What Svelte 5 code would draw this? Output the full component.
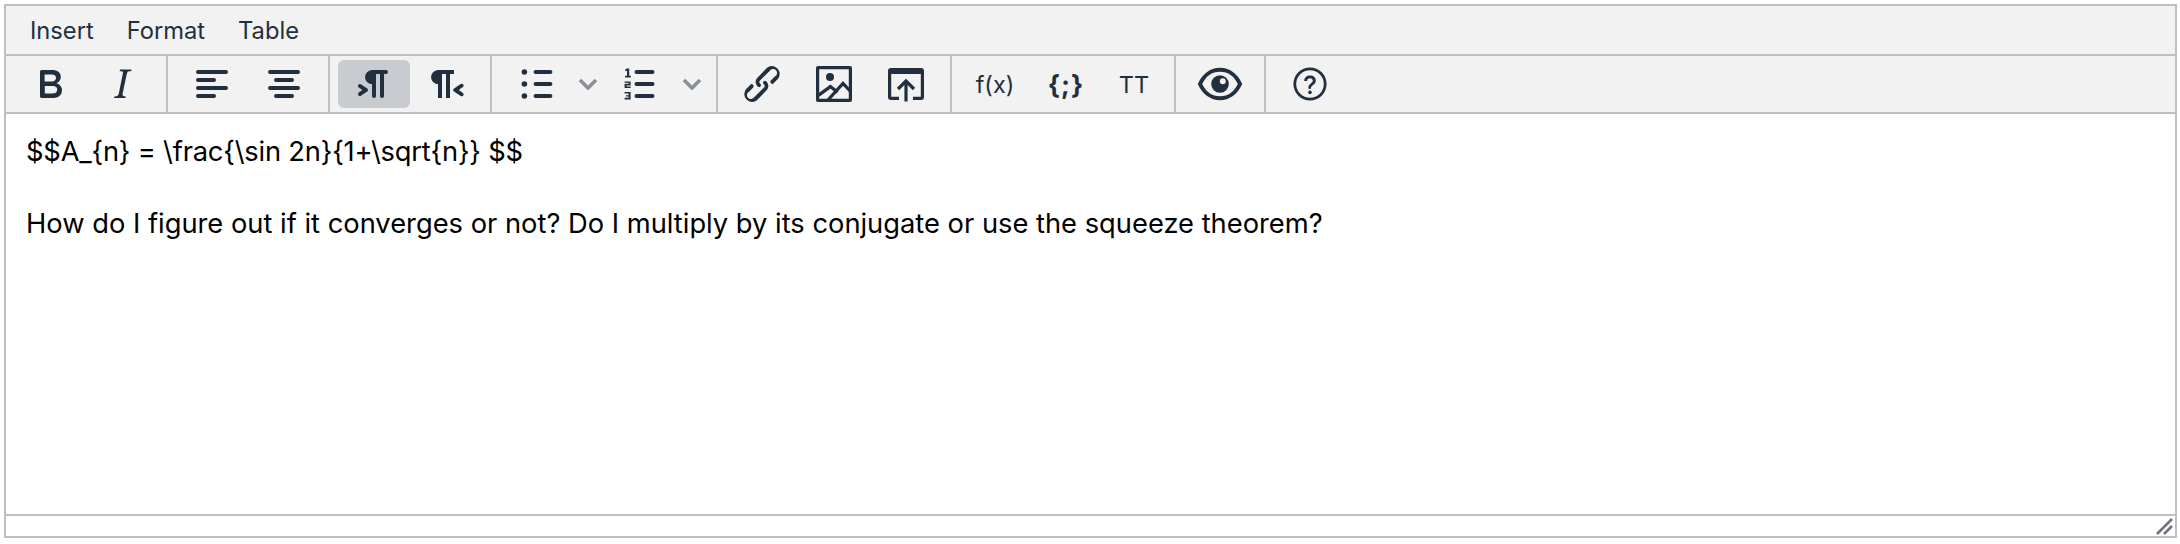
<script>
  const menus = ["Insert", "Format", "Table"];
</script>

<div class="editor">
  <div class="menubar">
    {#each menus as m}
      <button class="menu">{m}</button>
    {/each}
  </div>

  <div class="toolbar">
    <div class="group">
      <button class="tb" aria-label="Bold">
        <svg viewBox="0 0 24 24"><path d="M7.8 19c-.3 0-.5 0-.6-.2l-.2-.5V5.7c0-.2 0-.4.2-.5l.6-.2h5c1.5 0 2.7.3 3.5 1 .7.6 1.1 1.4 1.1 2.5a3 3 0 0 1-.6 1.9c-.4.6-1 1-1.6 1.2.4.1.9.3 1.3.6s.8.7 1 1.2c.4.4.5 1 .5 1.6 0 1.3-.4 2.3-1.3 3-.8.7-2.1 1-3.8 1H7.8zm5-8.3c.6 0 1.2-.1 1.6-.5.4-.3.6-.7.6-1.3 0-1.1-.8-1.7-2.3-1.7H9.3v3.5h3.4zm.5 6c.7 0 1.3-.1 1.7-.4.4-.4.6-.9.6-1.5s-.2-1-.7-1.4c-.4-.3-1-.4-2-.4H9.4v3.8h4z" /></svg>
      </button>
      <button class="tb" aria-label="Italic">
        <svg viewBox="0 0 24 24"><path d="M16.7 4.7l-.1.9h-.3c-.6 0-1 0-1.4.3-.3.3-.4.6-.5 1.1l-2.1 9.8v.6c0 .5.4.8 1.4.8h.2l-.2.8H8l.2-.8h.2c1.1 0 1.8-.5 2-1.5l2-9.8.1-.5c0-.6-.4-.8-1.4-.8h-.3l.2-.9h5.8z" /></svg>
      </button>
    </div>

    <div class="group">
      <button class="tb" aria-label="Align left">
        <svg viewBox="0 0 24 24"><path d="M5 5h14c.6 0 1 .4 1 1s-.4 1-1 1H5a1 1 0 1 1 0-2zm0 4h8c.6 0 1 .4 1 1s-.4 1-1 1H5a1 1 0 1 1 0-2zm0 8h8c.6 0 1 .4 1 1s-.4 1-1 1H5a1 1 0 0 1 0-2zm0-4h14c.6 0 1 .4 1 1s-.4 1-1 1H5a1 1 0 0 1 0-2z" /></svg>
      </button>
      <button class="tb" aria-label="Align center">
        <svg viewBox="0 0 24 24"><path d="M5 5h14c.6 0 1 .4 1 1s-.4 1-1 1H5a1 1 0 1 1 0-2zm3 4h8c.6 0 1 .4 1 1s-.4 1-1 1H8a1 1 0 1 1 0-2zm0 8h8c.6 0 1 .4 1 1s-.4 1-1 1H8a1 1 0 0 1 0-2zm-3-4h14c.6 0 1 .4 1 1s-.4 1-1 1H5a1 1 0 0 1 0-2z" /></svg>
      </button>
    </div>

    <div class="group">
      <button class="tb active" aria-label="Left to right">
        <svg viewBox="0 0 24 24"><path d="M11 5h7a1 1 0 0 1 0 2h-1v11a1 1 0 0 1-2 0V7h-2v11a1 1 0 0 1-2 0v-6c-.5 0-1 0-1.4-.3A3.4 3.4 0 0 1 7.8 10a3.3 3.3 0 0 1 0-2.8 3.4 3.4 0 0 1 1.8-1.8L11 5zM4.4 16.2L6.2 15l-1.8-1.2a1 1 0 0 1 1.2-1.6l3 2a1 1 0 0 1 0 1.6l-3 2a1 1 0 1 1-1.2-1.6z" /></svg>
      </button>
      <button class="tb" aria-label="Right to left">
        <svg viewBox="0 0 24 24"><path d="M8 5h8v2h-2v12h-2V7h-2v12H8v-7c-.5 0-1 0-1.4-.3A3.4 3.4 0 0 1 4.8 10a3.3 3.3 0 0 1 0-2.8 3.4 3.4 0 0 1 1.8-1.8L8 5zm12 11.2a1 1 0 1 1-1 1.6l-3-2a1 1 0 0 1 0-1.6l3-2a1 1 0 1 1 1 1.6L18.4 15l1.8 1.2z" /></svg>
      </button>
    </div>

    <div class="group">
      <button class="split-main" aria-label="Bullet list">
        <svg viewBox="0 0 24 24">
          <circle cx="7.2" cy="6" r="1.4" /><circle cx="7.2" cy="12" r="1.4" /><circle cx="7.2" cy="18" r="1.4" />
          <path d="M12.8 5h7.4a1 1 0 0 1 0 2h-7.4a1 1 0 0 1 0-2zm0 6h7.4a1 1 0 0 1 0 2h-7.4a1 1 0 0 1 0-2zm0 6h7.4a1 1 0 0 1 0 2h-7.4a1 1 0 0 1 0-2z" />
        </svg>
      </button>
      <button class="split-arrow" aria-label="Bullet list options">
        <svg viewBox="0 0 10 6"><path d="M1 1l4 4 4-4" /></svg>
      </button>
      <button class="split-main" aria-label="Numbered list">
        <svg viewBox="0 0 24 24">
          <path d="M11.250 5h8a1 1 0 0 1 0 2h-8a1 1 0 0 1 0-2zm0 6h8a1 1 0 0 1 0 2h-8a1 1 0 0 1 0-2zm0 6h8a1 1 0 0 1 0 2h-8a1 1 0 0 1 0-2z" />
          <path transform="translate(.3 0)" d="M6.200 4.300h1.100v3.600h.8v.8H5.200v-.8h1V5.300l-.9.300v-.8zM5 10.700h3v2H6v.5h2v.8H5v-2.100h2v-.5H5zM5 16h3v3.700H5v-.8h2v-.7H5.700v-.6H7v-.8H5z" />
        </svg>
      </button>
      <button class="split-arrow" aria-label="Numbered list options">
        <svg viewBox="0 0 10 6"><path d="M1 1l4 4 4-4" /></svg>
      </button>
    </div>

    <div class="group">
      <button class="tb" aria-label="Link">
        <svg viewBox="0 0 24 24"><path d="M6.200 12.300a1 1 0 0 1 1.400 1.400l-2 2a2 2 0 1 0 2.600 2.800l4.800-4.800a1 1 0 0 0 0-1.400 1 1 0 1 1 1.400-1.300 2.900 2.900 0 0 1 0 4L9.600 20a3.900 3.900 0 0 1-5.500-5.500l2-2zm11.600-.6a1 1 0 0 1-1.400-1.400l2-2a2 2 0 1 0-2.600-2.800L11 10.300a1 1 0 0 0 0 1.400 1 1 0 1 1-1.400 1.300 2.900 2.900 0 0 1 0-4L14.400 4a3.900 3.900 0 0 1 5.500 5.500l-2 2z" /></svg>
      </button>
      <button class="tb" aria-label="Image">
        <svg viewBox="0 0 24 24">
          <path fill-rule="evenodd" d="M4 3h16a1 1 0 0 1 1 1v16a1 1 0 0 1-1 1H4a1 1 0 0 1-1-1V4a1 1 0 0 1 1-1zm.6 1.600v14.800h14.800V4.600z" />
          <circle cx="10" cy="8.500" r="2" />
          <path class="line" d="M4 17.800l6.200-4.500 3.600 2.800M9 20l7.500-8.300 4 4.300" />
        </svg>
      </button>
      <button class="tb" aria-label="Embed">
        <svg viewBox="0 0 24 24">
          <path d="M4.500 4h15A1.500 1.500 0 0 1 21 5.500v13a1.500 1.500 0 0 1-1.500 1.500h-4v-1.600h3.900V7H4.600v11.400h3.900V20h-4A1.500 1.500 0 0 1 3 18.500v-13A1.500 1.500 0 0 1 4.500 4z" />
          <path class="line" d="M12 20.800V11M8 14.500l4-4 4 4" />
        </svg>
      </button>
    </div>

    <div class="group">
      <button class="tb txt fx">f(x)</button>
      <button class="tb txt code">{"{;}"}</button>
      <button class="tb txt tt">TT</button>
    </div>

    <div class="group">
      <button class="tb" aria-label="Preview">
        <svg viewBox="0 0 24 24">
          <path class="line eye" d="M2 12C4 7.600 7.700 4.900 12 4.900s8 2.700 10 7.100c-2 4.400-5.700 7.100-10 7.100S4 16.400 2 12z" />
          <path fill-rule="evenodd" d="M12 7.600a4.400 4.400 0 1 1 0 8.800 4.400 4.400 0 0 1 0-8.800zm1.400 1.500a1.500 1.500 0 1 0 0 3 1.500 1.500 0 0 0 0-3z" />
        </svg>
      </button>
    </div>

    <div class="group last">
      <button class="tb" aria-label="Help">
        <svg viewBox="0 0 24 24">
          <path fill-rule="evenodd" d="M12 3.700a8.300 8.300 0 1 1 0 16.600 8.300 8.300 0 0 1 0-16.600zm0 1.400a6.900 6.900 0 1 0 0 13.800 6.900 6.900 0 0 0 0-13.800z" />
          <path d="M11.200 14.400v-.6c0-1 .4-1.500 1.200-2.100.7-.5 1-.8 1-1.400 0-.7-.6-1.200-1.400-1.200-.8 0-1.400.5-1.500 1.400H9.100c.1-1.700 1.300-2.700 2.900-2.700 1.700 0 2.900 1 2.900 2.500 0 1-.5 1.600-1.300 2.200-.8.600-1.100.9-1.100 1.500v.4z" />
          <circle cx="12" cy="16.200" r=".9" />
        </svg>
      </button>
    </div>
  </div>

  <div class="content">
    <p>$$A_&#123;n&#125; = \frac&#123;\sin 2n&#125;&#123;1+\sqrt&#123;n&#125;&#125; $$</p>
    <p>How do I figure out if it converges or not? Do I multiply by its conjugate or use the squeeze theorem?</p>
  </div>

  <div class="statusbar">
    <svg class="grip" viewBox="0 0 18 18"><path d="M2 16L17 1M9 16l8-8" /></svg>
  </div>
</div>

<style>
  :global(body) {
    margin: 0;
    background: #fff;
  }

  .editor {
    margin: 4px 3px 0 4px;
    height: 534px;
    box-sizing: border-box;
    border: 2px solid #bfbfbf;
    display: flex;
    flex-direction: column;
    font-family: Inter, "Liberation Sans", sans-serif;
    color: #222f3e;
  }

  button {
    font: inherit;
    color: inherit;
    background: none;
    border: 0;
    padding: 0;
    margin: 0;
    display: flex;
    align-items: center;
    justify-content: center;
  }

  .menubar {
    display: flex;
    height: 48px;
    padding-left: 7px;
    background: #f2f2f2;
    border-bottom: 2px solid #bfbfbf;
    box-sizing: content-box;
  }

  .menu {
    padding: 0 16.5px;
    font-size: 23.7px;
    height: 48px;
  }

  .menu:first-child {
    padding-left: 17px;
  }

  .toolbar {
    display: flex;
    height: 56px;
    background: #f2f2f2;
    border-bottom: 2px solid #bfbfbf;
  }

  .group {
    display: flex;
    align-items: center;
    padding: 0 8px;
    border-right: 2px solid #bfbfbf;
  }

  .group.last {
    border-right: 0;
  }

  .tb {
    width: 72px;
    height: 48px;
    border-radius: 6px;
  }

  .tb.active {
    background: #c8cbcf;
  }

  svg {
    width: 48px;
    height: 48px;
    fill: #222f3e;
  }

  .line {
    fill: none;
    stroke: #222f3e;
    stroke-width: 1.6;
  }

  .line.eye {
    stroke-width: 2;
  }

  .split-main {
    width: 67px;
    height: 48px;
  }

  .split-arrow {
    width: 37px;
    height: 48px;
    padding-left: 5px;
  }

  .split-arrow svg {
    width: 20px;
    height: 12px;
    fill: none;
    stroke: #222f3e;
    stroke-opacity: 0.5;
    stroke-width: 1.8;
  }

  .txt {
    font-size: 23.5px;
  }

  .fx {
    width: 70px;
  }

  .code {
    width: 72px;
    font-weight: 700;
    font-size: 26px;
    letter-spacing: 1px;
  }

  .tt {
    width: 64px;
  }

  .content {
    flex: 1;
    background: #fff;
    padding: 20px 20px 0;
    font-family: Inter, "Liberation Sans", Arial, sans-serif;
    font-size: 27.3px;
    line-height: 36px;
    color: #000;
  }

  .content p {
    margin: 0 0 36px;
  }

  .content p:first-child {
    letter-spacing: -0.2px;
  }

  .statusbar {
    height: 20px;
    border-top: 2px solid #bfbfbf;
    background: #fff;
    display: flex;
    justify-content: flex-end;
    align-items: flex-end;
  }

  .grip {
    width: 18px;
    height: 18px;
    margin-right: 2px;
    fill: none;
    stroke: #6b7480;
    stroke-width: 2.6;
  }
</style>
